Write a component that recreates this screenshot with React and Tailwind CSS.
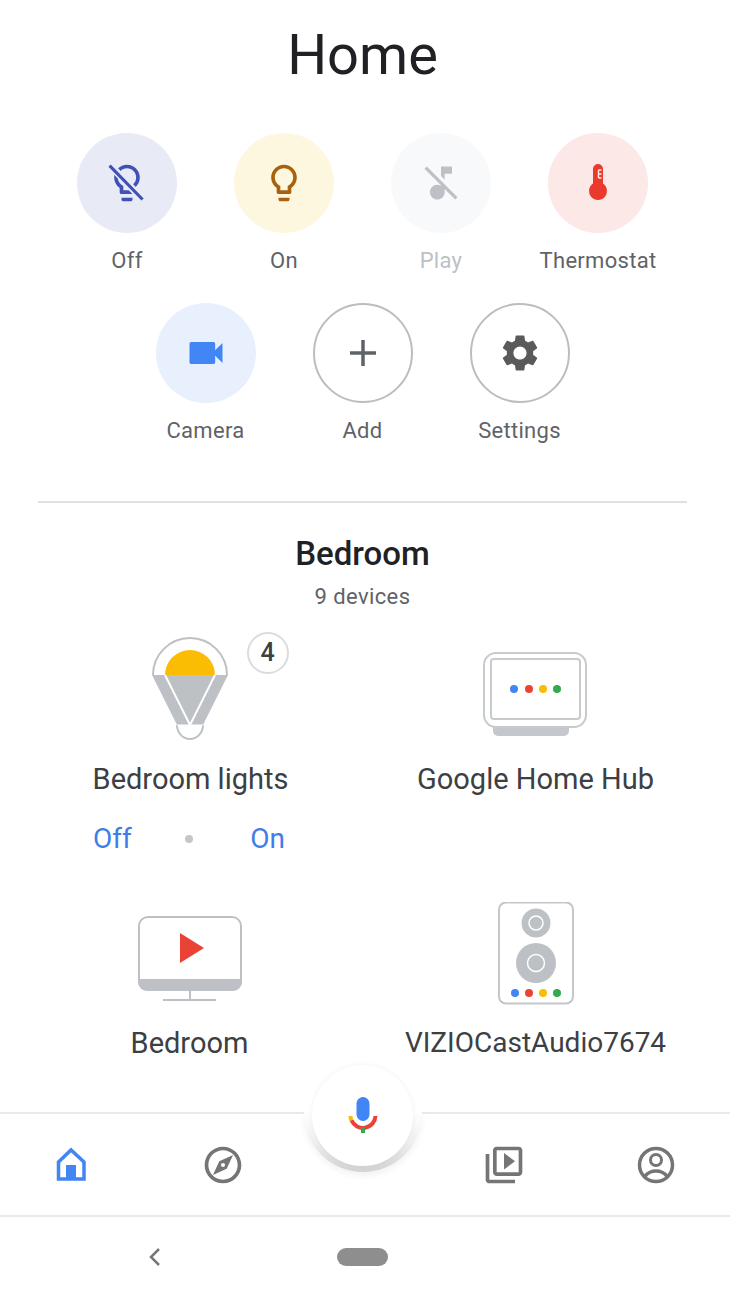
import React from 'react';

const BULB = "M9 21c0 .55.45 1 1 1h4c.55 0 1-.45 1-1v-1H9v1zm3-19C8.14 2 5 5.14 5 9c0 2.38 1.19 4.47 3 5.74V17c0 .55.45 1 1 1h6c.55 0 1-.45 1-1v-2.26c1.81-1.27 3-3.36 3-5.74 0-3.86-3.14-7-7-7zm2.85 11.1l-.85.6V16h-4v-2.3l-.85-.6C7.8 12.16 7 10.63 7 9c0-2.76 2.24-5 5-5s5 2.24 5 5c0 1.63-.8 3.16-2.15 4.1z";
const GEAR = "M19.14 12.94c.04-.3.06-.61.06-.94 0-.32-.02-.64-.07-.94l2.03-1.58c.18-.14.23-.41.12-.61l-1.92-3.32c-.12-.22-.37-.29-.59-.22l-2.39.96c-.5-.38-1.03-.7-1.62-.94l-.36-2.54c-.04-.24-.24-.41-.48-.41h-3.84c-.24 0-.43.17-.47.41l-.36 2.54c-.59.24-1.13.57-1.62.94l-2.39-.96c-.22-.08-.47 0-.59.22L2.74 8.87c-.12.21-.08.47.12.61l2.03 1.58c-.05.3-.09.63-.09.94s.02.64.07.94l-2.03 1.58c-.18.14-.23.41-.12.61l1.92 3.32c.12.22.37.29.59.22l2.39-.96c.5.38 1.03.7 1.62.94l.36 2.54c.05.24.24.41.48.41h3.84c.24 0 .44-.17.47-.41l.36-2.54c.59-.24 1.13-.56 1.62-.94l2.39.96c.22.08.47 0 .59-.22l1.92-3.32c.12-.22.07-.47-.12-.61l-2.01-1.58zM12 15.6c-1.98 0-3.6-1.62-3.6-3.6s1.62-3.6 3.6-3.6 3.6 1.62 3.6 3.6-1.62 3.6-3.6 3.6z";

function Glyph({ children, fill = 'currentColor' }) {
  return (
    <svg width="44" height="44" viewBox="0 0 24 24" fill={fill}>
      {children}
    </svg>
  );
}

function ActionButton({ label, circle, labelColor = 'text-[#5f6368]', children }) {
  return (
    <div className="w-[157px] flex flex-col items-center">
      <div className={`w-[100px] h-[100px] rounded-full flex items-center justify-center ${circle}`}>
        {children}
      </div>
      <div className={`mt-[14px] text-[22px] leading-[28px] tracking-[0.3px] ${labelColor}`}>{label}</div>
    </div>
  );
}

function BulbDevice() {
  return (
    <svg width="120" height="104" viewBox="1 0 120 104" fill="none">
      <path d="M23 38a37 37 0 0 1 74 0" stroke="#bdc1c6" strokeWidth="2" />
      <path d="M35 38a25 25 0 0 1 50 0z" fill="#fbbc04" />
      <path d="M22 38h76L73 88H47z" fill="#bdc1c6" />
      <path d="M35 38l25 50 25-50" stroke="#fff" strokeWidth="2" />
      <path d="M47 88a13 14 0 1 0 26 0" fill="#fff" stroke="#bdc1c6" strokeWidth="2" />
      <path d="M47 88h26" stroke="#fff" strokeWidth="1" />
    </svg>
  );
}

function HubDevice() {
  return (
    <svg width="120" height="104" viewBox="0 0 120 104" fill="none">
      <path d="M17 88h76v6a5 5 0 0 1-5 5H22a5 5 0 0 1-5-5z" fill="#c4c8cc" />
      <rect x="8" y="16" width="102" height="74" rx="12" fill="#fff" stroke="#c8cbce" strokeWidth="2" />
      <rect x="15" y="22" width="89" height="60" rx="3" stroke="#c8cbce" strokeWidth="2" />
      <circle cx="38" cy="52" r="4" fill="#4285f4" />
      <circle cx="53" cy="52" r="4" fill="#ea4335" />
      <circle cx="67" cy="52" r="4" fill="#fbbc04" />
      <circle cx="81" cy="52" r="4" fill="#34a853" />
    </svg>
  );
}

function TvDevice() {
  return (
    <svg width="120" height="104" viewBox="1 1 120 104" fill="none">
      <rect x="9" y="16" width="102" height="73" rx="9" stroke="#bdc1c6" strokeWidth="2" />
      <path d="M8 78h104v3a9 9 0 0 1-9 9H17a9 9 0 0 1-9-9z" fill="#bdc1c6" />
      <path d="M50 32l24 15-24 15z" fill="#ea4335" />
      <path d="M60 90v9M33 99h53" stroke="#bdc1c6" strokeWidth="2" />
    </svg>
  );
}

function SpeakerDevice() {
  return (
    <svg width="120" height="104" viewBox="0 1 120 104" fill="none">
      <rect x="23" y="1.500" width="74" height="101" rx="7" stroke="#c4c7ca" strokeWidth="2" />
      <circle cx="60" cy="22" r="14.5" fill="#bdc1c6" />
      <circle cx="60" cy="22" r="7" stroke="#fff" strokeWidth="1.5" />
      <circle cx="60" cy="62" r="20" fill="#bdc1c6" />
      <circle cx="60" cy="62" r="8.5" stroke="#fff" strokeWidth="1.5" />
      <circle cx="39" cy="92" r="4" fill="#4285f4" />
      <circle cx="53" cy="92" r="4" fill="#ea4335" />
      <circle cx="67" cy="92" r="4" fill="#fbbc04" />
      <circle cx="81" cy="92" r="4" fill="#34a853" />
    </svg>
  );
}

function DeviceLabel({ children, size = 'text-[29px]' }) {
  return <div className={`${size} leading-[36px] text-[#3c4043] whitespace-nowrap`}>{children}</div>;
}

export default function App() {
  return (
    <div className="w-[730px] h-[1289px] bg-white flex flex-col overflow-hidden" style={{ fontFamily: 'Roboto, sans-serif' }}>
      <div className="w-[725px] flex flex-col">
        <div className="h-[133px] pt-[19px] text-center">
          <h1 className="text-[56px] leading-[72px] text-[#202124]">Home</h1>
        </div>

        {/* action buttons */}
        <div className="h-[170px] flex justify-center">
          <ActionButton label="Off" circle="bg-[#e8eaf6]">
            <div className="text-[#3f51b5]">
              <Glyph>
                <path d={BULB} />
                <path d="M3 2.5L20.500 21" stroke="#e8eaf6" strokeWidth="4" />
                <path d="M2.500 2.500L20.500 21" stroke="currentColor" strokeWidth="1.7" />
              </Glyph>
            </div>
          </ActionButton>
          <ActionButton label="On" circle="bg-[#fef7e0]">
            <div className="text-[#a9610e]">
              <Glyph><path d={BULB} /></Glyph>
            </div>
          </ActionButton>
          <ActionButton label="Play" circle="bg-[#f8f9fb]" labelColor="text-[#bdc1c6]">
            <div className="text-[#bdc1c6]">
              <Glyph><path d="M4.27 3L3 4.27l9 9v.28c-.59-.34-1.27-.55-2-.55-2.21 0-4 1.79-4 4s1.79 4 4 4 4-1.79 4-4v-1.73L19.73 21 21 19.73 4.27 3zM14 7h4V3h-6v5.18l2 2z" /></Glyph>
            </div>
          </ActionButton>
          <ActionButton label="Thermostat" circle="bg-[#fce8e6]">
            <svg width="44" height="44" viewBox="0 0 44 44" fill="none">
              <path d="M17 8a5 5 0 0 1 10 0v14.500a9 9 0 1 1-10 0z" fill="#ea3a2e" />
              <path d="M22.500 9h3M22.500 13h3M22.500 17h3M22.500 9v8" stroke="#fce8e6" strokeWidth="1.4" />
            </svg>
          </ActionButton>
        </div>
        <div className="h-[170px] flex justify-center">
          <ActionButton label="Camera" circle="bg-[#e8f0fe]">
            <div className="text-[#4285f4]">
              <Glyph><path d="M17 10.5V7c0-.55-.45-1-1-1H4c-.55 0-1 .45-1 1v10c0 .55.45 1 1 1h12c.55 0 1-.45 1-1v-3.5l4 4v-11l-4 4z" /></Glyph>
            </div>
          </ActionButton>
          <ActionButton label="Add" circle="border-2 border-[#bdbdbd]">
            <svg width="44" height="44" viewBox="0 0 44 44" fill="none">
              <path d="M22 9v26M9 22h26" stroke="#5f6368" strokeWidth="3.500" />
            </svg>
          </ActionButton>
          <ActionButton label="Settings" circle="border-2 border-[#bdbdbd]">
            <div className="text-[#5a5a5a]">
              <Glyph><path d={GEAR} /></Glyph>
            </div>
          </ActionButton>
        </div>

        <div className="mt-[28px] ml-[38px] mr-[38px] h-[2px] bg-[#dfe1e3]" />

        {/* room */}
        <div className="mt-[31px] text-center text-[33px] leading-[40px] font-medium text-[#202124]">Bedroom</div>
        <div className="mt-[9px] text-center text-[22px] leading-[28px] tracking-[0.4px] text-[#5f6368]">9 devices</div>
      </div>

      <div className="mt-[26px] pl-[18px] grid grid-cols-[345px_345px]">
        <div className="flex flex-col items-center">
          <div className="relative">
            <BulbDevice />
            <div className="absolute left-[116px] top-[-5px] w-[42px] h-[42px] rounded-full border-2 border-[#dadce0] bg-white flex items-center justify-center text-[25px] font-medium text-[#3c4043]">4</div>
          </div>
          <div className="mt-[20px]"><DeviceLabel>Bedroom lights</DeviceLabel></div>
          <div className="mt-[27px] mr-[3px] w-[192px] flex items-center justify-between text-[28px] leading-[30px] text-[#3f7de8]">
            <span>Off</span>
            <span className="mr-[4px] w-[8px] h-[8px] rounded-full bg-[#c4c7ca]" />
            <span>On</span>
          </div>
        </div>
        <div className="flex flex-col items-center">
          <HubDevice />
          <div className="mt-[20px]"><DeviceLabel>Google Home Hub</DeviceLabel></div>
        </div>
      </div>

      <div className="mt-[48px] pl-[18px] grid grid-cols-[345px_345px]">
        <div className="flex flex-col items-center">
          <TvDevice />
          <div className="mt-[19px] mr-[2px]"><DeviceLabel>Bedroom</DeviceLabel></div>
        </div>
        <div className="flex flex-col items-center">
          <SpeakerDevice />
          <div className="mt-[19px]"><DeviceLabel size="text-[28px]">VIZIOCastAudio7674</DeviceLabel></div>
        </div>
      </div>

      {/* bottom tabs */}
      <div className="mt-auto relative h-[105px] border-y-2 border-[#e8e9ea] pl-[49px] pr-[52px] flex items-center justify-between">
        <div className="flex items-center gap-[108px]">
          <svg width="44" height="44" viewBox="0 0 44 44" fill="none">
            <path d="M9.500 19L22 7l13 12v17H9.500z" stroke="#4285f4" strokeWidth="3.500" />
            <rect x="17" y="22" width="10" height="14" fill="#4285f4" />
          </svg>
          <div className="text-[#757575]">
            <Glyph><path d="M12 2C6.48 2 2 6.48 2 12s4.48 10 10 10 10-4.48 10-10S17.52 2 12 2zm0 18c-4.41 0-8-3.59-8-8s3.59-8 8-8 8 3.59 8 8-3.59 8-8 8zm-5.5-2.5l7.51-3.49L17.5 6.5 9.99 9.99 6.5 17.5zm5.5-6.6c.61 0 1.1.49 1.1 1.1s-.49 1.1-1.1 1.1-1.1-.49-1.1-1.1.49-1.1 1.1-1.1z" /></Glyph>
          </div>
        </div>
        <div className="flex items-center gap-[108px]">
          <div className="text-[#757575]">
            <Glyph><path d="M4 6H2v14c0 1.1.9 2 2 2h14v-2H4V6zm16-4H8c-1.1 0-2 .9-2 2v12c0 1.1.9 2 2 2h12c1.1 0 2-.9 2-2V4c0-1.1-.9-2-2-2zm0 14H8V4h12v12zm-8-1.5l6-4.5-6-4.5v9z" /></Glyph>
          </div>
          <svg width="44" height="44" viewBox="0 0 44 44" fill="none" stroke="#757575">
            <circle cx="22" cy="22" r="16.500" strokeWidth="3.500" />
            <circle cx="22" cy="17" r="5.500" strokeWidth="3" />
            <path d="M11 33c3-3.500 7-5 11-5s8 1.500 11 5" strokeWidth="3.500" />
          </svg>
        </div>

        {/* mic notch + button */}
        <div className="absolute left-[304px] top-[-2px] w-[118px] h-[60px] rounded-b-full bg-gradient-to-b from-white via-[#efefef] to-[#d2d2d2] shadow-[0_4px_6px_rgba(0,0,0,0.05)]" />
        <div className="absolute left-[312px] top-[-49px] w-[101px] h-[101px] rounded-full bg-white shadow-[0_0_5px_rgba(0,0,0,0.06)] flex items-center justify-center">
          <svg width="40" height="50" viewBox="0 0 40 50" fill="none">
            <rect x="13.500" y="6" width="13" height="24" rx="6.500" fill="#4285f4" />
            <path d="M7.500 25c0 1.500.3 3 1 4.300" stroke="#fbbc04" strokeWidth="4" />
            <path d="M8.500 29.300A12.500 12.500 0 0 0 32.500 25" stroke="#ea4335" strokeWidth="4" />
            <rect x="18" y="36" width="4" height="6" fill="#34a853" />
          </svg>
        </div>
      </div>

      {/* android nav */}
      <div className="h-[72px] pt-[8px] pl-[147px] flex items-center relative">
        <svg width="14" height="20" viewBox="0 0 14 20" fill="none">
          <path d="M12 2L4 10l8 8" stroke="#777" strokeWidth="2.500" />
        </svg>
        <div className="ml-[176px] w-[51px] h-[18px] rounded-full bg-[#8e8e8e]" />
      </div>
    </div>
  );
}
